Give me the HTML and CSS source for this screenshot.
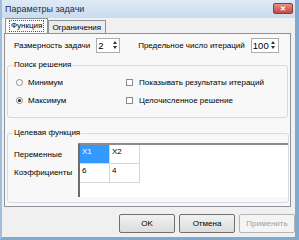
FILE: index.html
```html
<!DOCTYPE html>
<html lang="ru">
  <head>
    <meta charset="utf-8">
    <title>Параметры задачи</title>
    <link rel="stylesheet" href="styles.css">
  </head>
<body>
  <div class="window">
    <div class="titlebar">
      <span class="title">Параметры задачи</span>
      <span class="close">&#x2715;</span>
    </div>

    <div class="tabs">
      <div class="tab active"><span>Функция</span></div>
      <div class="tab">Ограничения</div>
    </div>

    <div class="page">
      <div class="limits">
        <label class="field">Размерность задачи
          <span class="spin small"><span class="val">2</span><span class="arrows"><i class="up"></i><i class="down"></i></span></span>
        </label>
        <label class="field">Предельное число итераций
          <span class="spin wide"><span class="val">100</span><span class="arrows"><i class="up"></i><i class="down"></i></span></span>
        </label>
      </div>

      <fieldset class="group search">
        <legend>Поиск решения</legend>
        <div class="cols">
          <div class="col">
            <div class="opt"><span class="radio"></span>Минимум</div>
            <div class="opt"><span class="radio on"></span>Максимум</div>
          </div>
          <div class="col">
            <div class="opt"><span class="check"></span>Показывать результаты итераций</div>
            <div class="opt"><span class="check"></span>Целочисленное решение</div>
          </div>
        </div>
      </fieldset>

      <fieldset class="group target">
        <legend>Целевая функция</legend>
        <div class="target-body">
          <div class="row-labels">
            <div>Переменные</div>
            <div>Коэффициенты</div>
          </div>
          <div class="grid">
            <div class="cell sel">X1</div>
            <div class="cell">X2</div>
            <div class="cell">6</div>
            <div class="cell">4</div>
          </div>
        </div>
      </fieldset>
    </div>

    <div class="buttons">
      <button class="btn">OK</button>
      <button class="btn">Отмена</button>
      <button class="btn" disabled>Применить</button>
    </div>
  </div>
</body>
</html>
```

FILE: styles.css
```css
* {
  box-sizing: border-box;
}

body {
  margin: 0;
  font-family: "Liberation Sans", Arial, sans-serif;
  font-size: 8px;
  color: #000;
}

.window {
  width: 299px;
  height: 240px;
  background: #f0f0f0;
  border-left: 2px solid #9fbfdd;
  border-right: 4px solid #7eaad2;
  border-bottom: 3px solid #7eaad2;
  display: flex;
  flex-direction: column;
  white-space: nowrap;
}

.titlebar {
  height: 18px;
  flex: none;
  background: linear-gradient(#dfeaf6, #c8dbef);
  display: flex;
  align-items: flex-start;
  justify-content: space-between;
  padding: 0 2px 0 3px;
}

.title {
  font-size: 9px;
  color: #1e2e44;
  margin-top: 4px;
}

.close {
  width: 20px;
  height: 11px;
  margin-top: 3px;
  border-radius: 2px;
  background: linear-gradient(#e3928a, #c54a3e);
  border: 1px solid #8f3a33;
  color: #fff;
  font-size: 7px;
  font-weight: bold;
  display: flex;
  align-items: center;
  justify-content: center;
}

.tabs {
  display: flex;
  align-items: flex-end;
  height: 15px;
  flex: none;
  padding-left: 3px;
}

.tab {
  height: 13px;
  padding: 0 4px 0 3px;
  border: 1px solid #8e939b;
  border-bottom: none;
  background: #ececec;
  display: flex;
  align-items: center;
}

.tab.active {
  height: 15px;
  background: #fbfbfb;
  padding: 0 3px;
}

.tab.active span {
  border: 1px dotted #555;
  padding: 0 1px;
  line-height: 10px;
}

.page {
  margin: 0 4px 0 2px;
  height: 174px;
  flex: none;
  border: 1px solid #8e939b;
  background: #f8f8f8;
  padding: 3px 1px 0 1px;
}

.limits {
  display: flex;
  gap: 18px;
  padding-left: 8px;
  height: 16px;
  align-items: center;
}

.field {
  display: flex;
  align-items: center;
  gap: 6px;
}

.spin {
  height: 15px;
  border: 1px solid #abadb3;
  background: #fff;
  display: flex;
  align-items: center;
  justify-content: space-between;
  font-size: 9.5px;
}

.spin.small {
  width: 24px;
}

.spin.wide {
  width: 28px;
}

.val {
  padding-left: 1px;
}

.arrows {
  width: 7px;
  height: 13px;
  display: flex;
  flex-direction: column;
  align-items: center;
  justify-content: center;
  gap: 2px;
  margin-right: 1px;
}

.arrows i {
  width: 0;
  height: 0;
  border-left: 2.5px solid transparent;
  border-right: 2.5px solid transparent;
}

.arrows .up {
  border-bottom: 3px solid #333;
}

.arrows .down {
  border-top: 3px solid #333;
}

.group {
  margin: 0 1px;
  padding: 0;
  border: 1px solid #d5dbe0;
  border-radius: 3px;
}

.group legend {
  margin-left: 5px;
  padding: 0 1px;
  line-height: 10px;
}

.search {
  margin-top: 7px;
  height: 58px;
}

.cols {
  display: flex;
  padding: 7px 0 0 8px;
}

.col {
  display: flex;
  flex-direction: column;
  gap: 7px;
}

.col:first-child {
  width: 110px;
}

.opt {
  display: flex;
  align-items: center;
  height: 11px;
  gap: 5px;
}

.radio {
  width: 7px;
  height: 7px;
  border-radius: 50%;
  border: 1px solid #8a8a8a;
  background: #fff;
  display: flex;
  align-items: center;
  justify-content: center;
}

.radio.on::after {
  content: "";
  width: 3px;
  height: 3px;
  border-radius: 50%;
  background: #222;
}

.check {
  width: 7px;
  height: 7px;
  border: 1px solid #8a8a8a;
  background: #fff;
  margin-right: 1px;
}

.target {
  margin-top: 10px;
  height: 75px;
}

.target-body {
  display: flex;
  padding-left: 6px;
  margin-top: 5px;
}

.row-labels {
  width: 64px;
  padding-top: 7px;
  display: flex;
  flex-direction: column;
  gap: 9px;
}

.grid {
  width: 210px;
  height: 54px;
  background: #fff;
  border-top: 2px solid #8c8c8c;
  border-left: 2px solid #6c6c6c;
  display: grid;
  grid-template-columns: 30px 30px;
  grid-auto-rows: 19px;
  align-content: start;
}

.cell {
  border-right: 1px solid #d6d6d6;
  border-bottom: 1px solid #d6d6d6;
  padding: 2px 0 0 2px;
}

.cell.sel {
  background: #3399ff;
  color: #fff;
}

.buttons {
  display: flex;
  justify-content: flex-end;
  gap: 4px;
  padding: 7px 0 0 0;
}

.btn {
  width: 56px;
  height: 19px;
  font-family: inherit;
  font-size: 8px;
  border: 1px solid #707070;
  border-radius: 2px;
  background: linear-gradient(#f2f2f2, #dcdcdc);
  padding: 0;
}

.btn:disabled {
  color: #a0a0a0;
  border-color: #b5b5b5;
  background: #f4f4f4;
}
```
